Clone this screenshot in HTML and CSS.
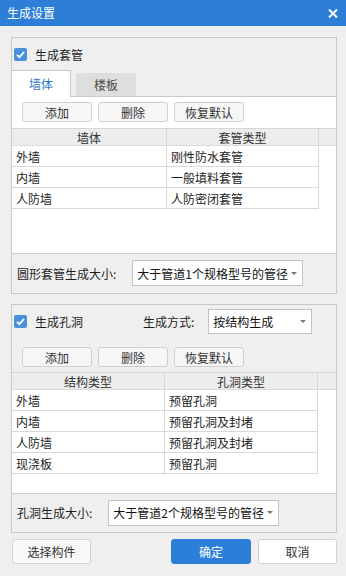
FILE: index.html
```html
<!DOCTYPE html>
<html lang="zh-CN">
<head>
  <meta charset="UTF-8">
  <title>生成设置</title>
  <link rel="stylesheet" href="styles.css">
</head>
<body>

<div class="dialog">
  <header class="titlebar">
    <span class="title">生成设置</span>
    <svg class="close" width="10" height="9" viewBox="0 0 10 9">
      <path d="M1 0.5 L9 8.5 M9 0.5 L1 8.5" stroke="#fff" stroke-width="2"/>
    </svg>
  </header>

  <div class="content">
    <!-- sleeves -->
    <section class="group group-sleeve">
      <div class="check-row">
        <span class="checkbox">
          <svg width="13" height="13" viewBox="0 0 13 13"><path d="M3 6.8 L5.4 9.2 L10 4" stroke="#fff" stroke-width="1.8" fill="none"/></svg>
        </span>
        <span>生成套管</span>
      </div>

      <div class="tabs">
        <div class="tab active">墙体</div>
        <div class="tab">楼板</div>
      </div>

      <div class="tab-panel">
        <div class="btn-row">
          <button class="btn">添加</button>
          <button class="btn">删除</button>
          <button class="btn">恢复默认</button>
        </div>
        <div class="grid grid-sleeve">
          <div class="grid-head">
            <div class="cell c1">墙体</div>
            <div class="cell c2">套管类型</div>
          </div>
          <div class="grid-row"><div class="cell c1">外墙</div><div class="cell c2">刚性防水套管</div></div>
          <div class="grid-row"><div class="cell c1">内墙</div><div class="cell c2">一般填料套管</div></div>
          <div class="grid-row"><div class="cell c1">人防墙</div><div class="cell c2">人防密闭套管</div></div>
        </div>
      </div>

      <div class="size-row">
        <span>圆形套管生成大小:</span>
        <div class="select select-size">
          <span>大于管道1个规格型号的管径</span>
          <i class="caret"></i>
        </div>
      </div>
    </section>

    <!-- holes -->
    <section class="group group-hole">
      <div class="check-row hole-head">
        <div class="check-label">
          <span class="checkbox">
            <svg width="13" height="13" viewBox="0 0 13 13"><path d="M3 6.8 L5.4 9.2 L10 4" stroke="#fff" stroke-width="1.8" fill="none"/></svg>
          </span>
          <span>生成孔洞</span>
        </div>
        <span>生成方式:</span>
        <div class="select select-mode">
          <span>按结构生成</span>
          <i class="caret"></i>
        </div>
      </div>

      <div class="btn-row btn-row-hole">
        <button class="btn">添加</button>
        <button class="btn">删除</button>
        <button class="btn">恢复默认</button>
      </div>

      <div class="grid grid-hole">
        <div class="grid-head">
          <div class="cell c1">结构类型</div>
          <div class="cell c2">孔洞类型</div>
        </div>
        <div class="grid-row"><div class="cell c1">外墙</div><div class="cell c2">预留孔洞</div></div>
        <div class="grid-row"><div class="cell c1">内墙</div><div class="cell c2">预留孔洞及封堵</div></div>
        <div class="grid-row"><div class="cell c1">人防墙</div><div class="cell c2">预留孔洞及封堵</div></div>
        <div class="grid-row"><div class="cell c1">现浇板</div><div class="cell c2">预留孔洞</div></div>
      </div>

      <div class="size-row">
        <span>孔洞生成大小:</span>
        <div class="select select-size">
          <span>大于管道2个规格型号的管径</span>
          <i class="caret"></i>
        </div>
      </div>
    </section>
  </div>

  <footer class="footer">
    <button class="btn btn-big">选择构件</button>
    <div class="footer-right">
      <button class="btn btn-big btn-primary">确定</button>
      <button class="btn btn-big btn-plain">取消</button>
    </div>
  </footer>
</div>

</body>
</html>
```

FILE: styles.css
```css
/* base */
* {
  margin: 0;
  padding: 0;
  box-sizing: border-box;
}

body {
  background: #efefef;
  font-family: "Noto Sans CJK SC", "Noto Sans", sans-serif;
  font-size: 12px;
  color: #1e1e1e;
}

.dialog {
  width: 346px;
  height: 576px;
  background: #efefef;
}

/* title bar */
.titlebar {
  height: 26px;
  background: #2c7ed7;
  color: #fff;
  display: flex;
  align-items: center;
  justify-content: space-between;
  padding: 0 8px 0 7px;
}

.title {
  font-size: 12px;
  line-height: 1;
}

.close {
  display: block;
}

.content {
  padding: 11px 9px 0 11px;
}

/* group boxes */
.group {
  border: 1px solid #c9c9c9;
}

.group-sleeve {
  height: 257px;
}

.group-hole {
  margin-top: 10px;
  height: 229px;
}

.check-row {
  display: flex;
  align-items: center;
  height: 32px;
  padding-left: 2px;
}

.checkbox {
  width: 13px;
  height: 13px;
  border-radius: 2px;
  background: #4a90de;
  margin-right: 8px;
  display: flex;
}

.hole-head {
  height: 29px;
  padding-top: 4px;
}

.check-label {
  display: flex;
  align-items: center;
  width: 129px;
}

/* tabs */
.tabs {
  display: flex;
  align-items: flex-end;
  height: 26px;
  margin-left: -1px;
  gap: 5px;
}

.tab {
  width: 60px;
  height: 23px;
  background: #dedede;
  color: #4a4a4a;
  text-align: center;
  line-height: 23px;
}

.tab.active {
  height: 27px;
  margin-bottom: -1px;
  line-height: 25px;
  background: #fff;
  color: #2f7ccc;
  border: 1px solid #c9c9c9;
  border-bottom: none;
  position: relative;
  z-index: 1;
}

.tab-panel {
  height: 158px;
  background: #fff;
  border-top: 1px solid #c9c9c9;
  border-bottom: 1px solid #cdcdcd;
  padding-top: 5px;
}

/* buttons */
.btn-row {
  display: flex;
  gap: 6px;
  padding-left: 10px;
}

.btn-row-hole {
  margin-top: 13px;
}

.btn {
  width: 70px;
  height: 20px;
  background: #f6f6f6;
  border: 1px solid #cfcfcf;
  border-radius: 3px;
  font-family: inherit;
  font-size: 12px;
  color: #333;
}

/* grids */
.grid {
  margin-top: 6px;
  border-top: 1px solid #d6d6d6;
}

.grid-hole {
  margin-top: 5px;
  height: 122px;
  background: #fff;
  border-bottom: 1px solid #cdcdcd;
}

.grid-head {
  display: flex;
  height: 17px;
  background: #ededed;
  border-bottom: 1px solid #dadada;
}

.grid-head .cell {
  text-align: center;
  color: #333;
  padding-left: 0;
}

.grid-row {
  display: flex;
  height: 21px;
}

.cell {
  border-right: 1px solid #d8d8d8;
  padding-left: 4px;
  display: flex;
  align-items: center;
  justify-content: flex-start;
  white-space: nowrap;
}

.grid-head .cell {
  justify-content: center;
}

.grid-row .cell {
  border-bottom: 1px solid #d8d8d8;
}

.grid-sleeve .c1 { width: 155px; }
.grid-sleeve .c2 { width: 152px; }
.grid-hole .c1 { width: 153px; }
.grid-hole .c2 { width: 153px; }

/* selects */
.size-row {
  display: flex;
  align-items: center;
  height: 38px;
  padding-left: 5px;
}

.group-hole .size-row {
  height: 37px;
}

.size-row .select {
  margin-left: 16px;
}

.select {
  height: 26px;
  margin-left: 14px;
  background: #fff;
  border: 1px solid #c3c3c3;
  display: flex;
  align-items: center;
  justify-content: space-between;
  padding: 0 5px 0 4px;
  color: #111;
}

.select-size {
  width: 171px;
}

.select-mode {
  width: 104px;
  height: 25px;
}

.caret {
  width: 0;
  height: 0;
  border-left: 3px solid transparent;
  border-right: 3px solid transparent;
  border-top: 3px solid #777;
}

/* footer */
.footer {
  display: flex;
  justify-content: space-between;
  padding: 6px 9px 0 12px;
}

.footer-right {
  display: flex;
  gap: 7px;
}

.btn-big {
  width: 79px;
  height: 25px;
  background: #f8f8f8;
  border-color: #d2d2d2;
}

.btn-primary {
  width: 80px;
  background: #2c7fd9;
  border-color: #2c7fd9;
  color: #fff;
}

.btn-plain {
  background: #fff;
}
```
